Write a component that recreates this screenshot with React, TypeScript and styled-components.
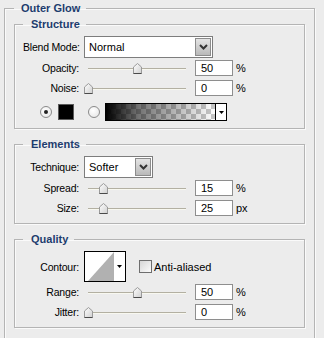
import styled, { createGlobalStyle } from 'styled-components';

const GlobalStyle = createGlobalStyle`
  html, body {
    margin: 0;
    padding: 0;
    background: #ececec;
    font-family: 'Liberation Sans', Arial, sans-serif;
    font-size: 11px;
    color: #000;
  }
`;

const OuterGroup = styled.fieldset`
  margin: 2px 9px 0 4px;
  padding: 3px 9px 30px 9px;
  border: 1px solid #b4b4b4;
  box-shadow: inset 1px 1px 0 #fafafa, 1px 1px 0 #fafafa;
`;

const OuterTitle = styled.legend`
  padding: 0 6px 0 7px;
  line-height: 13px;
  font-weight: bold;
  color: #1d3c6e;
`;

const Group = styled.fieldset<{ $top?: number }>`
  margin: ${(p) => p.$top ?? 0}px 0 0 0;
  padding: 5px 8px 5px 8px;
  border: 1px solid #b4b4b4;
  box-shadow: inset 1px 1px 0 #fafafa, 1px 1px 0 #fafafa;
`;

const GroupTitle = styled.legend`
  padding: 0 6px 0 8px;
  line-height: 13px;
  font-weight: bold;
  color: #1d3c6e;
`;

const Row = styled.div<{ $h: number; $mt?: number; $indent?: number }>`
  display: flex;
  align-items: center;
  height: ${(p) => p.$h}px;
  margin-top: ${(p) => p.$mt ?? 0}px;
  padding-left: ${(p) => p.$indent ?? 0}px;
`;

const Label = styled.div`
  width: 56px;
  margin-right: 5px;
  text-align: right;
  white-space: nowrap;
  font-size: 10.5px;
  letter-spacing: -0.2px;
`;

const SelectBox = styled.div<{ $w: number }>`
  display: flex;
  align-items: center;
  justify-content: space-between;
  box-sizing: border-box;
  width: ${(p) => p.$w}px;
  height: 22px;
  padding: 1px 1px 1px 4px;
  background: #fff;
  border: 1px solid #7d7d7d;
`;

const DropButton = styled.div`
  display: flex;
  align-items: center;
  justify-content: center;
  box-sizing: border-box;
  width: 16px;
  height: 18px;
  background: linear-gradient(#e4e4e4, #b9b9b9);
  border: 1px solid #8c8c8c;
`;

const SliderTrack = styled.div`
  position: relative;
  width: 106px;
  height: 20px;
  margin-right: 5px;
`;

const Groove = styled.div`
  position: absolute;
  left: 4px;
  right: 4px;
  top: 10px;
  height: 1px;
  background: #b3b0a2;
  border-bottom: 1px solid #f8f8f0;
`;

const Thumb = styled.svg`
  position: absolute;
  top: 5px;
`;

const NumberBox = styled.div`
  box-sizing: border-box;
  width: 38px;
  height: 16px;
  padding: 1px 0 0 5px;
  line-height: 13px;
  background: #fff;
  border: 1px solid #8e8e8e;
`;

const Unit = styled.span`
  margin-left: 3px;
`;

const Radio = styled.div<{ $on?: boolean }>`
  display: flex;
  align-items: center;
  justify-content: center;
  box-sizing: border-box;
  width: 12px;
  height: 12px;
  border-radius: 50%;
  border: 1px solid #8a8a8a;
  background: radial-gradient(circle at 40% 35%, #fff, #e2e2e2);
  &::after {
    content: '';
    display: ${(p) => (p.$on ? 'block' : 'none')};
    width: 4px;
    height: 4px;
    border-radius: 50%;
    background: #222;
  }
`;

const Swatch = styled.div`
  box-sizing: border-box;
  width: 16px;
  height: 16px;
  margin: 0 14px 0 6px;
  background: #000;
  border: 1px solid #5a5a5a;
`;

const GradientPicker = styled.div`
  display: flex;
  box-sizing: border-box;
  width: 122px;
  height: 18px;
  margin-left: 5px;
  border: 1px solid #000;
`;

const GradientStrip = styled.div`
  flex: 1;
  background: linear-gradient(to right, #000, rgba(0, 0, 0, 0.55) 30%, rgba(0, 0, 0, 0)),
    repeating-conic-gradient(#c8c8c8 0 25%, #fff 0 50%) 0 0 / 10px 10px;
`;

const SmallArrow = styled.div`
  display: flex;
  align-items: center;
  justify-content: center;
  width: 10px;
  background: #fff;
  border-left: 1px solid #000;
`;

const ContourPicker = styled.div`
  display: flex;
  box-sizing: border-box;
  width: 42px;
  height: 31px;
  margin-right: 13px;
  border: 1px solid #000;
  background: #fff;
`;

const ContourArrow = styled.div`
  display: flex;
  align-items: center;
  justify-content: center;
  flex: 1;
`;

const CheckBox = styled.div`
  box-sizing: border-box;
  width: 13px;
  height: 13px;
  margin-right: 2px;
  border: 1px solid #6e6e6e;
  background: linear-gradient(135deg, #d6d6d6, #fbfbfb);
`;

const Arrow = () => (
  <svg width="5" height="3" viewBox="0 0 5 3">
    <polygon points="0,0 5,0 2.5,3" fill="#000" />
  </svg>
);

const Chevron = () => (
  <svg width="9" height="6" viewBox="0 0 9 6">
    <polyline points="1,1 4.5,4.5 8,1" fill="none" stroke="#333" strokeWidth="2" />
  </svg>
);

const Select = ({ value, width }: { value: string; width: number }) => (
  <SelectBox $w={width}>
    <span>{value}</span>
    <DropButton>
      <Chevron />
    </DropButton>
  </SelectBox>
);

const Slider = ({ pct }: { pct: number }) => (
  <SliderTrack>
    <Groove />
    <Thumb width="9" height="11" viewBox="0 0 9 11" style={{ left: pct * 0.98 }}>
      <defs>
        <linearGradient id="thumbFill" x1="0" y1="0" x2="1" y2="1">
          <stop offset="0" stopColor="#ffffff" />
          <stop offset="1" stopColor="#cfcfcf" />
        </linearGradient>
      </defs>
      <polygon points="4.5,0.5 8.5,4 8.5,10.5 0.5,10.5 0.5,4" fill="url(#thumbFill)" stroke="#9a9a9a" />
      <line x1="0.5" y1="10.5" x2="8.5" y2="10.5" stroke="#4a4a4a" />
    </Thumb>
  </SliderTrack>
);

const SliderRow = ({ label, pct, value, unit }: { label: string; pct: number; value: string; unit: string }) => (
  <Row $h={20}>
    <Label>{label}</Label>
    <Slider pct={pct} />
    <NumberBox>{value}</NumberBox>
    <Unit>{unit}</Unit>
  </Row>
);

export default function App() {
  return (
    <>
      <GlobalStyle />
      <OuterGroup>
        <OuterTitle>Outer Glow</OuterTitle>

        <Group>
          <GroupTitle>Structure</GroupTitle>
          <Row $h={22}>
            <Label>Blend Mode:</Label>
            <Select value="Normal" width={129} />
          </Row>
          <SliderRow label="Opacity:" pct={50} value="50" unit="%" />
          <SliderRow label="Noise:" pct={0} value="0" unit="%" />
          <Row $h={22} $mt={3} $indent={17}>
            <Radio $on />
            <Swatch />
            <Radio />
            <GradientPicker>
              <GradientStrip />
              <SmallArrow>
                <Arrow />
              </SmallArrow>
            </GradientPicker>
          </Row>
        </Group>

        <Group $top={9}>
          <GroupTitle>Elements</GroupTitle>
          <Row $h={22}>
            <Label>Technique:</Label>
            <Select value="Softer" width={69} />
          </Row>
          <SliderRow label="Spread:" pct={15} value="15" unit="%" />
          <SliderRow label="Size:" pct={15} value="25" unit="px" />
        </Group>

        <Group $top={9}>
          <GroupTitle>Quality</GroupTitle>
          <Row $h={31}>
            <Label>Contour:</Label>
            <ContourPicker>
              <svg width="29" height="29" viewBox="0 0 29 29">
                <polygon points="3,29 29,0 29,29" fill="#b1b1b1" />
              </svg>
              <ContourArrow>
                <Arrow />
              </ContourArrow>
            </ContourPicker>
            <CheckBox />
            <span>Anti-aliased</span>
          </Row>
          <SliderRow label="Range:" pct={50} value="50" unit="%" />
          <SliderRow label="Jitter:" pct={0} value="0" unit="%" />
        </Group>
      </OuterGroup>
    </>
  );
}
